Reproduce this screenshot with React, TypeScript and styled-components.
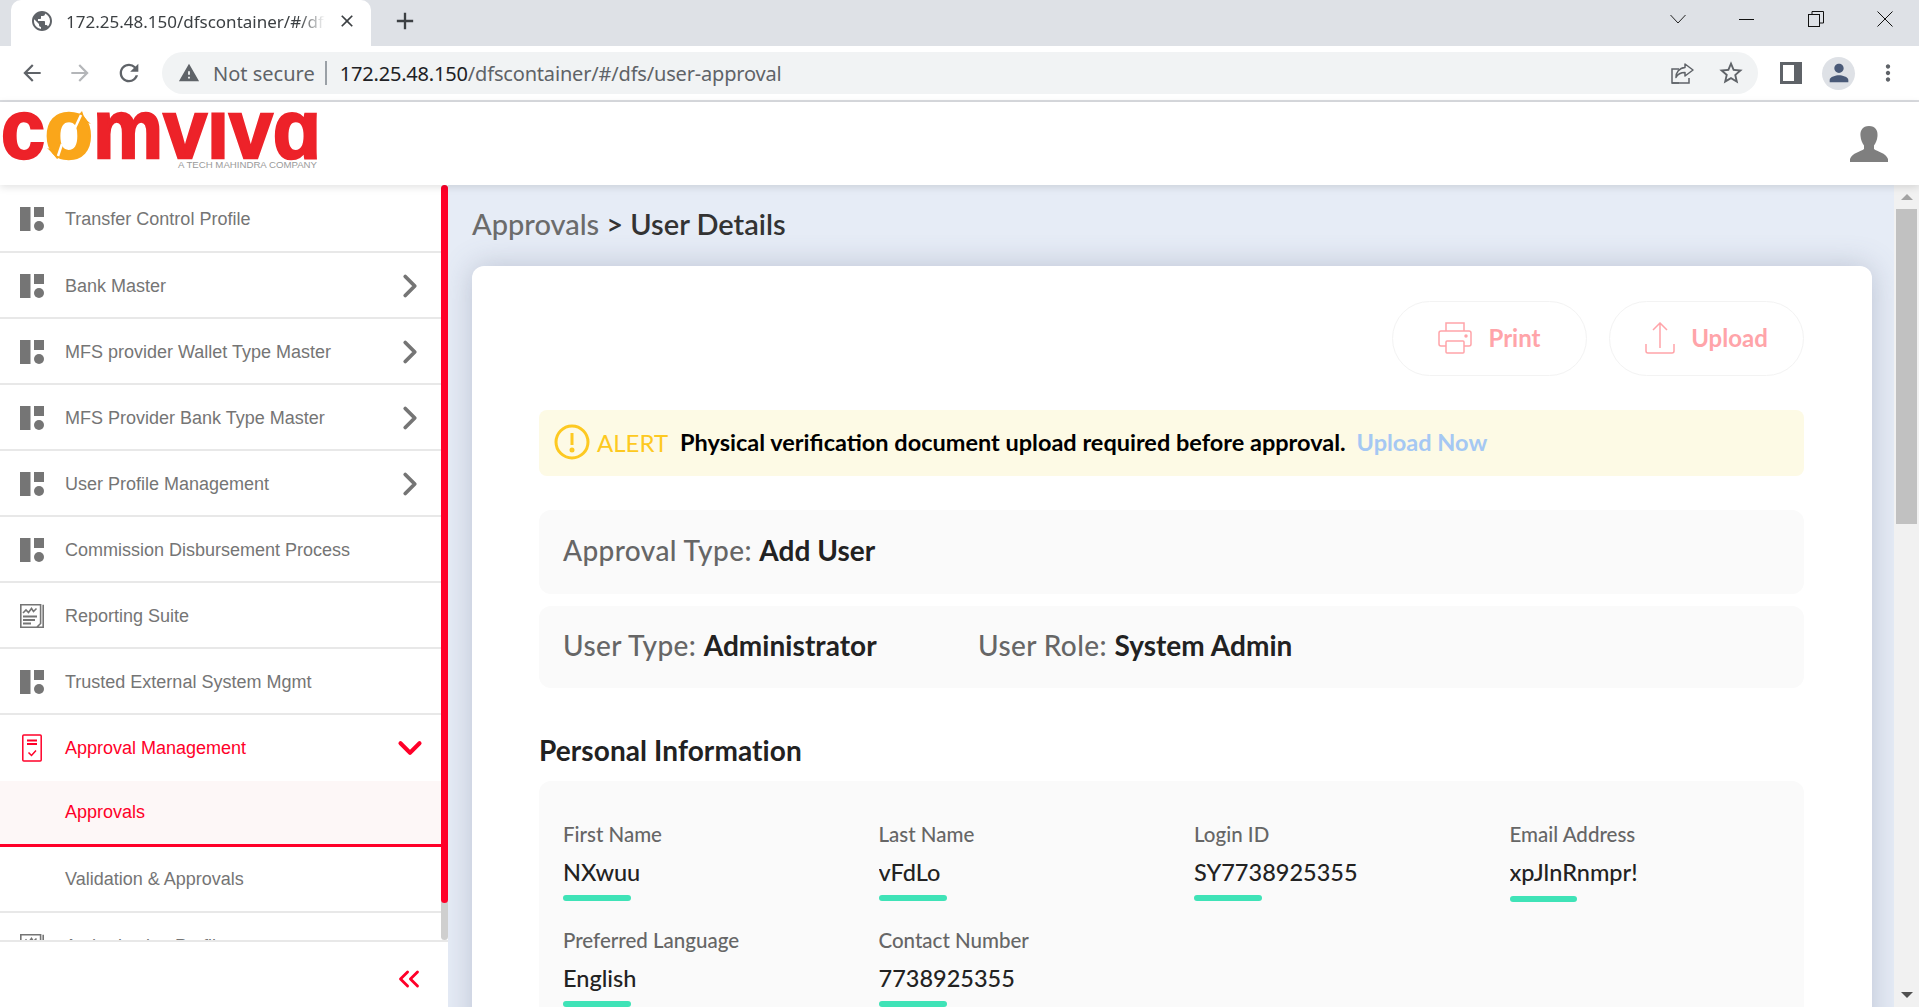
import styled, { createGlobalStyle } from "styled-components";
import { MdAdd, MdArrowBack, MdArrowForward, MdClose, MdMoreVert, MdPerson, MdPublic, MdRefresh, MdStarBorder, MdWarning } from "react-icons/md";
import { ChevronDown, ChevronRight, ChevronsLeft } from "lucide-react";

const GlobalStyle = createGlobalStyle`
    html, body {
        margin: 0;
        height: 100%;
        overflow: hidden;
        background: #fff;
    }
    * {
        box-sizing: border-box;
    }
`;

type IconKind = "grid" | "report" | "approval";
type Arrow = "right" | "down";

interface MenuEntry {
    label: string;
    icon?: IconKind;
    arrow?: Arrow;
    active?: boolean;
    selected?: boolean;
    sub?: boolean;
}

const menu: MenuEntry[] = [
    { label: "Transfer Control Profile", icon: "grid" },
    { label: "Bank Master", icon: "grid", arrow: "right" },
    { label: "MFS provider Wallet Type Master", icon: "grid", arrow: "right" },
    { label: "MFS Provider Bank Type Master", icon: "grid", arrow: "right" },
    { label: "User Profile Management", icon: "grid", arrow: "right" },
    { label: "Commission Disbursement Process", icon: "grid" },
    { label: "Reporting Suite", icon: "report" },
    { label: "Trusted External System Mgmt", icon: "grid" },
    { label: "Approval Management", icon: "approval", arrow: "down", active: true },
    { label: "Approvals", sub: true, active: true, selected: true },
    { label: "Validation & Approvals", sub: true },
    { label: "Authorization Profile", icon: "report" },
];

const fields = [
    { label: "First Name", value: "NXwuu" },
    { label: "Last Name", value: "vFdLo" },
    { label: "Login ID", value: "SY7738925355" },
    { label: "Email Address", value: "xpJlnRnmpr!gmail.com", clipped: true },
    { label: "Preferred Language", value: "English" },
    { label: "Contact Number", value: "7738925355" },
];

function MenuIcon({ kind }: { kind: IconKind }) {
    if (kind === "grid") {
        return (
            <svg width="24" height="24" viewBox="0 0 24 24" fill="#757575">
                <rect x="0" y="0" width="10.5" height="24" />
                <rect x="14" y="0" width="10" height="10" />
                <circle cx="19" cy="19" r="5" />
            </svg>
        );
    }
    if (kind === "report") {
        return (
            <svg width="24" height="24" viewBox="0 0 24 24" fill="none" stroke="#757575" strokeWidth="1.6">
                <path d="M23.200 .8V23.200H.8V.8H20.600V19.500L17 23" />
                <path d="M3 9l3-3 2.500 2.500 3-4 2 3 3-3" />
                <path d="M3 12.500H17M3 16H15M3 19.500H11" strokeWidth="2" />
            </svg>
        );
    }
    return (
        <svg width="24" height="28" viewBox="0 0 24 28" fill="none" stroke="#ff0029" strokeWidth="1.5">
            <rect x="2.800" y="1" width="18.400" height="26" rx="1" />
            <path d="M7 6.500H17M7 10H17" strokeWidth="1.800" />
            <path d="M8.500 18.500l3 3 4.500-5" />
        </svg>
    );
}

function ShareIcon() {
    return (
        <svg width="24" height="22" viewBox="0 0 24 22" fill="none" stroke="#5f6368" strokeWidth="1.5">
            <path d="M8 21H1V7H8" />
            <path d="M1 21H18V16" />
            <path d="M14 2l8 6-8 6v-3.500c-4 0-7 1-9 5 0-5 3-9.500 9-10z" strokeLinejoin="round" />
        </svg>
    );
}

function ComvivaLogo() {
    return (
        <svg viewBox="0 0 320 72" width="320" height="72">
            <text x="1" y="50" textLength="320" lengthAdjust="spacingAndGlyphs" fontFamily="'Liberation Sans', sans-serif" fontWeight="700" fontSize="84" fill="#ed2229" stroke="#ed2229" strokeWidth="2.5">
                c<tspan fill="#faa61a" stroke="#faa61a">o</tspan>mvıvɑ
            </text>
            <path d="M72 9q7-2 10-6q2 8 9 13zM57 51q-4-6-10-11l18 6z" fill="#faa61a" />
            <path d="M81 7l-6 13M62 36l-4 12" fill="none" stroke="#fff" strokeWidth="2.5" />
            <text x="178" y="60" textLength="139" lengthAdjust="spacingAndGlyphs" fontFamily="'Liberation Sans', sans-serif" fontSize="9.5" fill="#9a9a9a">
                A TECH MAHINDRA COMPANY
            </text>
        </svg>
    );
}

function App() {
    return (
        <Page>
            <GlobalStyle />
            <TabStrip>
                <Tab>
                    <MdPublic size={24} color="#5f6368" />
                    <TabTitle>172.25.48.150/dfscontainer/#/dfs/user-approval</TabTitle>
                    <MdClose size={20} color="#3c4043" />
                </Tab>
                <NewTab>
                    <MdAdd size={28} color="#3c4043" />
                </NewTab>
                <WindowControls>
                    <svg width="16" height="10" viewBox="0 0 16 10" fill="none" stroke="#222" strokeWidth="1">
                        <path d="M.5 1L8 9l7.500-8" />
                    </svg>
                    <svg width="16" height="10" viewBox="0 0 16 10" fill="none" stroke="#111" strokeWidth="1">
                        <path d="M0 5.500H15" />
                    </svg>
                    <svg width="16" height="16" viewBox="0 0 16 16" fill="none" stroke="#111" strokeWidth="1">
                        <rect x=".5" y="3.500" width="11" height="12" />
                        <path d="M4 3.500V.5H15.500V12H11.500" />
                    </svg>
                    <svg width="16" height="16" viewBox="0 0 16 16" fill="none" stroke="#111" strokeWidth="1">
                        <path d="M.5 .5l15 15M15.500 .5l-15 15" />
                    </svg>
                </WindowControls>
            </TabStrip>

            <Toolbar>
                <NavIcons>
                    <MdArrowBack size={26} color="#5f6368" />
                    <MdArrowForward size={26} color="#b4b6b9" />
                    <MdRefresh size={28} color="#5f6368" />
                </NavIcons>
                <Omnibox>
                    <MdWarning size={22} color="#5f6368" />
                    <NotSecure>Not secure</NotSecure>
                    <Divider />
                    <Url>
                        172.25.48.150<UrlPath>/dfscontainer/#/dfs/user-approval</UrlPath>
                    </Url>
                    <OmniboxEnd>
                        <ShareIcon />
                        <MdStarBorder size={28} color="#5f6368" />
                    </OmniboxEnd>
                </Omnibox>
                <ToolbarEnd>
                    <svg width="22" height="22" viewBox="0 0 22 22">
                        <rect width="22" height="22" fill="#5f6368" />
                        <rect x="3" y="3" width="11" height="16" fill="#fff" />
                    </svg>
                    <Avatar>
                        <MdPerson size={28} color="#4a5a78" />
                    </Avatar>
                    <MdMoreVert size={26} color="#5f6368" />
                </ToolbarEnd>
            </Toolbar>

            <AppHeader>
                <ComvivaLogo />
                <svg width="38" height="36" viewBox="0 0 38 36" fill="#7f7f7f">
                    <path d="M19 0c6.500 0 9 4.500 8.500 10-.3 4-2 7.500-3.500 9.500v3.500c3 2.500 12 4 14 10v3H0v-3c2-6 11-7.500 14-10v-3.500C12.500 17.500 10.800 14 10.500 10 10 4.500 12.500 0 19 0z" />
                </svg>
            </AppHeader>

            <Body>
                <Sidebar>
                    <MenuArea>
                        <MenuList>
                            {menu.map((item) => (
                                <MenuRow key={item.label} $active={item.active} $selected={item.selected} $sub={item.sub}>
                                    <IconSlot>{item.icon && <MenuIcon kind={item.icon} />}</IconSlot>
                                    <MenuLabel>{item.label}</MenuLabel>
                                    {item.arrow === "right" && <ChevronRight size={38} strokeWidth={2.4} color="#757575" />}
                                    {item.arrow === "down" && <ChevronDown size={38} strokeWidth={2.6} color="#ff0029" />}
                                </MenuRow>
                            ))}
                        </MenuList>
                        <MenuTrack>
                            <MenuThumb />
                        </MenuTrack>
                    </MenuArea>
                    <SidebarFooter>
                        <ChevronsLeft size={34} strokeWidth={2} color="#ff0029" />
                    </SidebarFooter>
                </Sidebar>

                <Content>
                    <Breadcrumb>
                        <BreadcrumbParent>Approvals</BreadcrumbParent> &gt; User Details
                    </Breadcrumb>
                    <Card>
                        <ActionRow>
                            <ActionButton>
                                <svg width="34" height="32" viewBox="0 0 34 32" fill="none" stroke="#ffa4a9" strokeWidth="1.5">
                                    <path d="M8 9V1H26V9" />
                                    <path d="M8 24H3a2 2 0 0 1-2-2V11a2 2 0 0 1 2-2H31a2 2 0 0 1 2 2V22a2 2 0 0 1-2 2H26" />
                                    <rect x="8" y="19" width="18" height="12" rx="1" />
                                    <circle cx="28" cy="14" r="1" fill="#ffa4a9" />
                                </svg>
                                Print
                            </ActionButton>
                            <ActionButton>
                                <svg width="30" height="32" viewBox="0 0 30 32" fill="none" stroke="#ffa4a9" strokeWidth="1.5">
                                    <path d="M15 1V26M8 8l7-7 7 7" />
                                    <path d="M1 22V29a2 2 0 0 0 2 2H27a2 2 0 0 0 2-2V22" />
                                </svg>
                                Upload
                            </ActionButton>
                        </ActionRow>

                        <AlertBar>
                            <svg width="36" height="36" viewBox="0 0 36 36" fill="none" stroke="#fdc921" strokeWidth="3">
                                <circle cx="18" cy="18" r="16" />
                                <path d="M18 9V21" />
                                <circle cx="18" cy="26" r="1" fill="#fdc921" />
                            </svg>
                            <AlertTag>ALERT</AlertTag>
                            <AlertText>Physical verification document upload required before approval.</AlertText>
                            <AlertLink>Upload Now</AlertLink>
                        </AlertBar>

                        <InfoRow $height={84} $top={34}>
                            <InfoItem>
                                Approval Type: <strong>Add User</strong>
                            </InfoItem>
                        </InfoRow>
                        <InfoRow $height={82} $top={12}>
                            <InfoItem $width={415}>
                                User Type: <strong>Administrator</strong>
                            </InfoItem>
                            <InfoItem>
                                User Role: <strong>System Admin</strong>
                            </InfoItem>
                        </InfoRow>

                        <SectionTitle>Personal Information</SectionTitle>
                        <FieldPanel>
                            {fields.map((field) => (
                                <Field key={field.label}>
                                    <FieldLabel>{field.label}</FieldLabel>
                                    <FieldValue $clipped={field.clipped}>{field.value}</FieldValue>
                                    <FieldBar $clipped={field.clipped} />
                                </Field>
                            ))}
                        </FieldPanel>
                    </Card>
                </Content>

                <PageScrollbar>
                    <ScrollArrow />
                    <ScrollThumb />
                    <ScrollSpacer />
                    <ScrollArrow $down />
                </PageScrollbar>
            </Body>
        </Page>
    );
}

const appFont = `Lato, "Noto Sans", sans-serif`;

const Page = styled.div`
    display: flex;
    flex-direction: column;
    width: 1919px;
    height: 1007px;
    overflow: hidden;
    font-family: "Liberation Sans", Arial, sans-serif;
`;

const TabStrip = styled.div`
    display: flex;
    align-items: stretch;
    height: 46px;
    flex-shrink: 0;
    background: #dee1e6;
    padding-left: 11px;
`;

const Tab = styled.div`
    display: flex;
    align-items: center;
    gap: 12px;
    width: 360px;
    padding: 0 14px 4px 19px;
    background: #fff;
    border-radius: 10px 10px 0 0;
`;

const TabTitle = styled.div`
    flex: 1;
    min-width: 0;
    overflow: hidden;
    white-space: nowrap;
    font: 400 17px "Noto Sans", sans-serif;
    color: #3c4043;
    mask-image: linear-gradient(to right, #000 90%, transparent);
`;

const NewTab = styled.div`
    display: flex;
    align-items: center;
    padding: 0 0 4px 20px;
`;

const WindowControls = styled.div`
    display: flex;
    align-items: center;
    gap: 53px;
    margin-left: auto;
    padding: 0 26px 8px 0;
`;

const Toolbar = styled.div`
    display: flex;
    align-items: center;
    height: 56px;
    flex-shrink: 0;
    background: #fff;
    border-bottom: 2px solid #dadce0;
`;

const NavIcons = styled.div`
    display: flex;
    align-items: center;
    gap: 22px;
    width: 162px;
    padding-left: 19px;
`;

const Omnibox = styled.div`
    display: flex;
    align-items: center;
    width: 1596px;
    height: 42px;
    background: #f1f3f4;
    border-radius: 21px;
    padding: 0 13px 0 16px;
`;

const NotSecure = styled.span`
    margin-left: 13px;
    font: 400 20px "Noto Sans", sans-serif;
    color: #5f6368;
`;

const Divider = styled.span`
    width: 2px;
    height: 24px;
    margin: 0 13px 0 10px;
    background: #9aa0a6;
`;

const Url = styled.span`
    font: 400 20px "Noto Sans", sans-serif;
    letter-spacing: -0.18px;
    color: #202124;
`;

const UrlPath = styled.span`
    color: #5f6368;
`;

const OmniboxEnd = styled.div`
    display: flex;
    align-items: center;
    gap: 22px;
    margin-left: auto;
`;

const ToolbarEnd = styled.div`
    display: flex;
    align-items: center;
    gap: 20px;
    padding-left: 22px;
`;

const Avatar = styled.div`
    display: flex;
    align-items: center;
    justify-content: center;
    width: 33px;
    height: 33px;
    border-radius: 50%;
    background: #dee1e6;
`;

const AppHeader = styled.header`
    display: flex;
    align-items: center;
    justify-content: space-between;
    height: 83px;
    flex-shrink: 0;
    padding: 0 31px 0 0;
    background: #fff;
    box-shadow: 0 2px 8px rgba(0, 0, 0, 0.12);
    position: relative;
    z-index: 2;
`;

const Body = styled.div`
    display: flex;
    flex: 1;
    min-height: 0;
    background: #e6ecf6;
`;

const Sidebar = styled.aside`
    display: flex;
    flex-direction: column;
    width: 448px;
    flex-shrink: 0;
    background: #fff;
`;

const MenuArea = styled.div`
    display: flex;
    height: 755px;
    flex-shrink: 0;
    overflow: hidden;
`;

const MenuList = styled.div`
    flex: 1;
    min-width: 0;
    overflow: hidden;
`;

const MenuRow = styled.div<{ $active?: boolean; $selected?: boolean; $sub?: boolean }>`
    display: flex;
    align-items: center;
    height: 66px;
    padding: ${(p) => (p.$active || p.$sub ? "0" : "2px")} 12px 0 20px;
    color: ${(p) => (p.$active ? "#ff0029" : "#757575")};
    background: ${(p) => (p.$selected ? "#fdf7f7" : "#fff")};
    border-bottom: ${(p) => (p.$selected ? "3px solid #ff0029" : p.$active && !p.$sub ? "none" : "2px solid #e8e8e8")};

    &:first-child {
        height: 68px;
    }
`;

const IconSlot = styled.div`
    display: flex;
    align-items: center;
    width: 45px;
    flex-shrink: 0;
`;

const MenuLabel = styled.span`
    flex: 1;
    font-size: 18px;
`;

const MenuTrack = styled.div`
    width: 7px;
    flex-shrink: 0;
    background: #cfcfcf;
    border-radius: 4px;
`;

const MenuThumb = styled.div`
    height: 718px;
    background: #ff0029;
    border-radius: 4px;
`;

const SidebarFooter = styled.div`
    display: flex;
    align-items: center;
    justify-content: flex-end;
    flex: 1;
    padding: 8px 22px 0 0;
    border-top: 2px solid #e8e8e8;
`;

const Content = styled.main`
    flex: 1;
    min-width: 0;
    padding: 0 22px 0 24px;
    overflow: hidden;
    font-family: ${appFont};
`;

const Breadcrumb = styled.h1`
    margin: 0;
    height: 81px;
    display: flex;
    align-items: center;
    gap: 7px;
    padding-bottom: 4px;
    font-size: 29px;
    font-weight: 600;
    color: #333;
`;

const BreadcrumbParent = styled.span`
    font-weight: 500;
    color: #6b6b6b;
`;

const Card = styled.section`
    height: 900px;
    padding: 35px 68px 0 67px;
    background: #fff;
    border-radius: 12px;
    box-shadow: 0 0 30px rgba(90, 100, 130, 0.3);
`;

const ActionRow = styled.div`
    display: flex;
    justify-content: flex-end;
    gap: 22px;
`;

const ActionButton = styled.div`
    display: flex;
    align-items: center;
    justify-content: center;
    gap: 16px;
    width: 195px;
    height: 75px;
    padding-bottom: 2px;
    border: 1px solid #f3f3f3;
    border-radius: 38px;
    font-size: 24px;
    font-weight: 700;
    color: #ffa4a9;
`;

const AlertBar = styled.div`
    display: flex;
    align-items: center;
    height: 66px;
    margin-top: 34px;
    padding: 0 0 2px 15px;
    background: #fdfae5;
    border-radius: 8px;
    font-size: 23.5px;
`;

const AlertTag = styled.span`
    margin-left: 7px;
    font-size: 24px;
    color: #fdc921;
`;

const AlertText = styled.span`
    margin-left: 12px;
    font-weight: 700;
    color: #000;
`;

const AlertLink = styled.span`
    margin-left: 11px;
    font-weight: 700;
    color: #a5c8f3;
`;

const InfoRow = styled.div<{ $height: number; $top: number }>`
    display: flex;
    align-items: center;
    height: ${(p) => p.$height}px;
    margin-top: ${(p) => p.$top}px;
    padding: 0 0 4px 24px;
    background: #fafafa;
    border-radius: 12px;
`;

const InfoItem = styled.div<{ $width?: number }>`
    width: ${(p) => (p.$width ? `${p.$width}px` : "auto")};
    font-size: 28px;
    font-weight: 500;
    letter-spacing: 0.4px;
    color: #666;

    strong {
        font-weight: 700;
        letter-spacing: 0.05px;
        color: #222;
    }
`;

const SectionTitle = styled.h2`
    margin: 46px 0 15px;
    font-size: 28px;
    line-height: 32px;
    font-weight: 700;
    letter-spacing: 0.1px;
    color: #222;
`;

const FieldPanel = styled.div`
    display: grid;
    grid-template-columns: repeat(4, 315.5px);
    grid-auto-rows: 106px;
    padding: 39px 24px 0;
    background: #fafafa;
    border-radius: 12px;
`;

const Field = styled.div`
    display: flex;
    flex-direction: column;
    min-width: 0;
`;

const FieldLabel = styled.div`
    font-size: 20.5px;
    line-height: 28px;
    font-weight: 500;
    color: #666;
`;

const FieldValue = styled.div<{ $clipped?: boolean }>`
    max-width: ${(p) => (p.$clipped ? "128px" : "none")};
    margin-top: 8px;
    overflow: hidden;
    white-space: nowrap;
    font-size: 23.5px;
    line-height: 32px;
    font-weight: 500;
    color: #222;
`;

const FieldBar = styled.div<{ $clipped?: boolean }>`
    width: ${(p) => (p.$clipped ? "67px" : "68px")};
    height: 6px;
    margin-top: ${(p) => (p.$clipped ? "8px" : "7px")};
    background: #3fe3b7;
    border-radius: 3px;
`;

const PageScrollbar = styled.div`
    display: flex;
    flex-direction: column;
    align-items: center;
    width: 25px;
    flex-shrink: 0;
    background: #f1f1f1;
`;

const ScrollArrow = styled.div<{ $down?: boolean }>`
    width: 0;
    height: 0;
    margin: 9px 0;
    border-left: 6px solid transparent;
    border-right: 6px solid transparent;
    ${(p) => (p.$down ? "border-top: 6px solid #505050;" : "border-bottom: 6px solid #a3a3a3;")}
`;

const ScrollThumb = styled.div`
    width: 21px;
    height: 315px;
    background: #c1c1c1;
`;

const ScrollSpacer = styled.div`
    flex: 1;
`;

export default App;
